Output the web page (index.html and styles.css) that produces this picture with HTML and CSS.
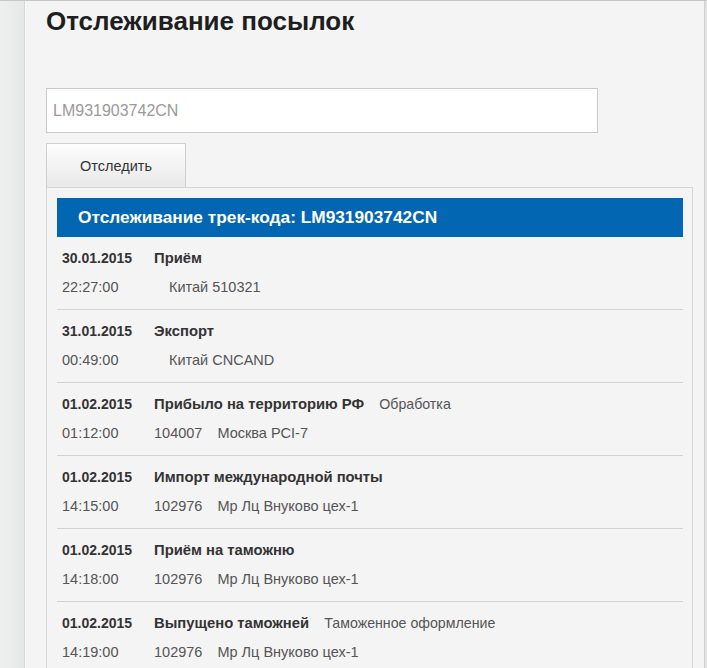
FILE: index.html
```html
<!DOCTYPE html>
<html lang="ru">
<head>
    <meta charset="UTF-8">
    <meta name="viewport" content="width=device-width, initial-scale=1.0">
    <title>Отслеживание посылок</title>
    <link rel="stylesheet" href="styles.css">
</head>
<body>
    <div class="page">
        <div class="side"></div>
        <div class="content">
            <h1>Отслеживание посылок</h1>
            <form class="track-form">
                <input type="text" class="track-input" value="LM931903742CN">
                <button type="button" class="track-btn">Отследить</button>
            </form>
            <div class="result">
                <div class="result-head">Отслеживание трек-кода: LM931903742CN</div>

                <div class="event">
                    <div class="date">30.01.2015</div>
                    <div class="title">Приём</div>
                    <div class="time">22:27:00</div>
                    <div class="place"><span class="index"></span>Китай 510321</div>
                </div>

                <div class="event">
                    <div class="date">31.01.2015</div>
                    <div class="title">Экспорт</div>
                    <div class="time">00:49:00</div>
                    <div class="place"><span class="index"></span>Китай CNCAND</div>
                </div>

                <div class="event">
                    <div class="date">01.02.2015</div>
                    <div class="title">Прибыло на территорию РФ <span class="status">Обработка</span></div>
                    <div class="time">01:12:00</div>
                    <div class="place"><span class="index">104007</span>Москва PCI-7</div>
                </div>

                <div class="event">
                    <div class="date">01.02.2015</div>
                    <div class="title">Импорт международной почты</div>
                    <div class="time">14:15:00</div>
                    <div class="place"><span class="index">102976</span>Мр Лц Внуково цех-1</div>
                </div>

                <div class="event">
                    <div class="date">01.02.2015</div>
                    <div class="title">Приём на таможню</div>
                    <div class="time">14:18:00</div>
                    <div class="place"><span class="index">102976</span>Мр Лц Внуково цех-1</div>
                </div>

                <div class="event">
                    <div class="date">01.02.2015</div>
                    <div class="title">Выпущено таможней <span class="status">Таможенное оформление</span></div>
                    <div class="time">14:19:00</div>
                    <div class="place"><span class="index">102976</span>Мр Лц Внуково цех-1</div>
                </div>
            </div>
        </div>
        <div class="side-right"></div>
    </div>
</body>
</html>
```

FILE: styles.css
```css
body {
    margin: 0;
    padding: 0;
    font-family: "Liberation Sans", Arial, sans-serif;
    color: #333;
    background: #f4f4f4;
}

.page {
    display: flex;
    min-height: 100vh;
    border-top: 1px solid #c6c6c6;
    box-sizing: border-box;
}

.side {
    width: 24px;
    flex: none;
    background: linear-gradient(to right, #efefef, #e6e8e8);
    border-right: 1px solid #d6d6d6;
}

.content {
    flex: 1;
    background-color: #f4f4f4;
    padding: 5px 0 0 20px;
    border-left: 1px solid #fafafa;
    border-right: 1px solid #cfcfcf;
}

.side-right {
    width: 2px;
    flex: none;
    background: #e2e2e2;
}

h1 {
    margin: 0;
    font-size: 26px;
    line-height: 30px;
    font-weight: bold;
    color: #1e1e1e;
}

.track-form {
    margin: 52px 0 0 0;
}

.track-input {
    display: block;
    width: 552px;
    height: 45px;
    box-sizing: border-box;
    border: 1px solid #cacaca;
    background: #fff;
    padding: 0 6px;
    font-family: "Liberation Sans", Arial, sans-serif;
    font-size: 16px;
    color: #9a9a9a;
    outline: none;
}

.track-btn {
    display: block;
    margin-top: 10px;
    width: 140px;
    height: 44px;
    border: 1px solid #cfcfcf;
    border-bottom: none;
    background: linear-gradient(to bottom, #fdfdfd, #e9e9e9);
    font-family: "Liberation Sans", Arial, sans-serif;
    font-size: 14.5px;
    color: #333;
    cursor: pointer;
}

.result {
    width: 647px;
    box-sizing: border-box;
    border: 1px solid #d6d6d6;
    border-bottom: none;
    padding: 10px 9px 0 10px;
    background: #f4f4f4;
}

.result-head {
    background-color: #0366b2;
    color: #fff;
    font-size: 17.3px;
    font-weight: bold;
    height: 39px;
    line-height: 39px;
    padding-left: 21px;
}

.event {
    display: grid;
    grid-template-columns: 92px 1fr;
    padding: 7px 5px;
    line-height: 29px;
    font-size: 14.5px;
    border-bottom: 1px solid #d2d2d2;
}

.event:last-child {
    border-bottom: none;
}

.date {
    font-size: 14px;
    font-weight: bold;
    color: #333;
}

.title {
    font-size: 14.8px;
    font-weight: bold;
    color: #333;
}

.status {
    font-size: 14.2px;
    font-weight: normal;
    color: #555;
    margin-left: 11px;
}

.time,
.place {
    color: #555;
}

.index {
    margin-right: 15px;
}
```
